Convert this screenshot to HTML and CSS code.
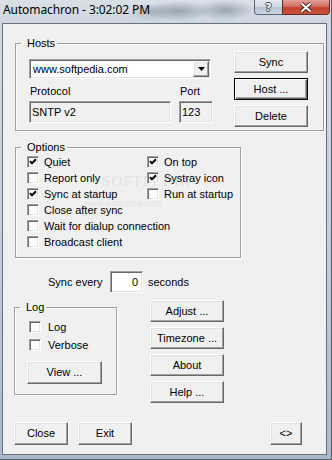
FILE: index.html
```html
<!DOCTYPE html>
<html>
<head>
<meta charset="utf-8">
<link rel="stylesheet" href="styles.css">
</head>
<body>
<div class="window">
  <div class="titlebar">
    <span class="title">Automachron - 3:02:02 PM</span>
    <div class="caption-btns">
      <div class="cbtn help"><span>?</span></div>
      <div class="cbtn close">
        <svg width="14" height="11" viewBox="0 0 14 11"><path d="M2.5 1.5 11.5 9.5 M11.5 1.5 2.5 9.5" stroke="#3b2a2a" stroke-width="4" fill="none"/><path d="M2.5 1.5 11.5 9.5 M11.5 1.5 2.5 9.5" stroke="#fff" stroke-width="2" fill="none"/></svg>
      </div>
    </div>
  </div>
  <div class="client">
    <fieldset class="group hosts">
      <legend>Hosts</legend>
      <div class="hosts-body">
        <div class="hosts-left">
          <div class="combo sunken">
            <span class="combo-text">www.softpedia.com</span>
            <span class="drop raised"><svg width="7" height="4" viewBox="0 0 7 4"><path d="M0 0H7L3.5 4Z" fill="#000"/></svg></span>
          </div>
          <div class="fields">
            <div class="field proto"><div class="flabel">Protocol</div><div class="edit sunken ro">SNTP v2</div></div>
            <div class="field port"><div class="flabel">Port</div><div class="edit sunken ro">123</div></div>
          </div>
        </div>
        <div class="btn-col">
          <div class="btn raised">Sync</div>
          <div class="btn default">Host ...</div>
          <div class="btn raised">Delete</div>
        </div>
      </div>
    </fieldset>

    <fieldset class="group options">
      <legend>Options</legend>
      <div class="options-body">
        <div class="opt-col left">
          <div class="chk"><span class="cb sunken"><svg viewBox="0 0 8 8"><path d="M1 3.3 3 5.3 7 1.3"/></svg></span>Quiet</div>
          <div class="chk"><span class="cb sunken"></span>Report only</div>
          <div class="chk"><span class="cb sunken"><svg viewBox="0 0 8 8"><path d="M1 3.3 3 5.3 7 1.3"/></svg></span>Sync at startup</div>
          <div class="chk"><span class="cb sunken"></span>Close after sync</div>
          <div class="chk"><span class="cb sunken"></span>Wait for dialup connection</div>
          <div class="chk"><span class="cb sunken"></span>Broadcast client</div>
        </div>
        <div class="opt-col right">
          <div class="chk"><span class="cb sunken"><svg viewBox="0 0 8 8"><path d="M1 3.3 3 5.3 7 1.3"/></svg></span>On top</div>
          <div class="chk"><span class="cb sunken"><svg viewBox="0 0 8 8"><path d="M1 3.3 3 5.3 7 1.3"/></svg></span>Systray icon</div>
          <div class="chk"><span class="cb sunken"></span>Run at startup</div>
        </div>
      </div>
    </fieldset>

    <div class="sync-row">
      <span class="sync-label">Sync every</span>
      <div class="num sunken">0</div>
      <span class="secs">seconds</span>
    </div>

    <div class="middle">
      <fieldset class="group log">
        <legend>Log</legend>
        <div class="log-body">
          <div class="chk"><span class="cb sunken"></span>Log</div>
          <div class="chk"><span class="cb sunken"></span>Verbose</div>
          <div class="btn raised view">View ...</div>
        </div>
      </fieldset>
      <div class="btn-col side">
        <div class="btn raised">Adjust ...</div>
        <div class="btn raised">Timezone ...</div>
        <div class="btn raised">About</div>
        <div class="btn raised">Help ...</div>
      </div>
    </div>

    <div class="bottom-row">
      <div class="btn raised close-btn">Close</div>
      <div class="btn raised exit-btn">Exit</div>
      <div class="btn raised arrows-btn">&lt;&gt;</div>
    </div>
  </div>
  <div class="watermark">SOFTPEDIA</div>
  <div class="watermark-url">www.softpedia.com</div>
</div>
</body>
</html>
```

FILE: styles.css
```css
* { box-sizing: border-box; }
html, body { margin: 0; padding: 0; }
body {
  width: 332px;
  height: 460px;
  overflow: hidden;
  font-family: "Liberation Sans", Arial, sans-serif;
  font-size: 11px;
  color: #000;
  background: #b9c7d5;
}

.window {
  position: relative;
  width: 332px;
  height: 460px;
  display: flex;
  flex-direction: column;
  background: linear-gradient(to bottom, #d2dbe4 0%, #c3cfdb 50%, #a9b9ca 100%);
  border-right: 1px solid #4f5d6b;
  border-bottom: 1px solid #4f5d6b;
}

.titlebar {
  height: 23px;
  flex: none;
  display: flex;
  align-items: flex-start;
  background:
    radial-gradient(ellipse 34px 10px at 178px 11px, rgba(80, 95, 110, .45), transparent),
    radial-gradient(ellipse 30px 10px at 225px 10px, rgba(85, 100, 115, .45), transparent),
    radial-gradient(ellipse 22px 9px at 150px 12px, rgba(110, 125, 140, .35), transparent),
    linear-gradient(to bottom, #d9e0e7, #cdd6df);
}
.title {
  font-family: "Noto Sans", "Open Sans", sans-serif;
  font-size: 12px;
  line-height: 20px;
  padding-left: 3px;
  color: #000;
  letter-spacing: -0.1px;
}
.caption-btns {
  margin-left: auto;
  margin-right: 1px;
  display: flex;
}
.cbtn {
  height: 15px;
  display: flex;
  align-items: center;
  justify-content: center;
  border: 1px solid #5c6670;
  border-top: none;
}
.cbtn.help {
  width: 28px;
  border-right: none;
  border-radius: 0 0 0 4px;
  background: linear-gradient(to bottom, #e4eaf0 0%, #cfd8e1 50%, #b8c5d2 51%, #c9d4df 100%);
}
.cbtn.help span {
  font-family: "DejaVu Sans", sans-serif;
  font-weight: bold;
  font-size: 11px;
  color: #fff;
  text-shadow: 1px 0 #3c4650, -1px 0 #3c4650, 0 1px #3c4650, 0 -1px #3c4650;
}
.cbtn.close {
  width: 48px;
  border-radius: 0 0 4px 0;
  border-color: #6a2a24;
  background: linear-gradient(to bottom, #e3a196 0%, #d36f60 45%, #c2402c 55%, #c9553f 100%);
}

.client {
  flex: 1;
  margin: 0 4px 4px 2px;
  border: 1px solid #65717e;
  background: #f0f0f0;
  padding: 13px 2px 9px 12px;
  display: flex;
  flex-direction: column;
}

/* 3D edges */
.raised {
  border: 1px solid;
  border-color: #fff #696969 #696969 #fff;
  box-shadow: inset -1px -1px #a0a0a0, inset 1px 1px #e3e3e3;
  background: #f0f0f0;
}
.sunken {
  border: 1px solid;
  border-color: #a0a0a0 #fff #fff #a0a0a0;
  box-shadow: inset 1px 1px #696969, inset -1px -1px #e3e3e3;
}

.group {
  margin: 0;
  padding: 0;
  min-width: 0;
  border: 1px solid #a0a0a0;
  box-shadow: inset 1px 1px #fff, 1px 1px #fff;
}
.group legend {
  font-size: 11px;
  line-height: 13px;
  padding: 0 2px 0 6px;
  margin-left: 5px;
  background: #f0f0f0;
}

.btn {
  height: 22px;
  display: flex;
  align-items: center;
  justify-content: center;
  line-height: 13px;
}
.btn.default {
  border: 1px solid #000;
  background: #f0f0f0;
  box-shadow: inset 1px 1px #fff, inset -1px -1px #696969, inset -2px -2px #a0a0a0;
}
.btn-col {
  display: flex;
  flex-direction: column;
  gap: 5px;
  width: 74px;
}

/* Hosts */
.hosts-body {
  display: flex;
  justify-content: space-between;
  padding: 1px 15px 3px 13px;
}
.hosts-left { margin-top: 8px; }
.combo {
  width: 182px;
  height: 20px;
  background: #fff;
  display: flex;
  align-items: center;
  padding-left: 3px;
}
.combo-text { line-height: 13px; }
.drop {
  margin-left: auto;
  margin-right: 1px;
  width: 16px;
  height: 16px;
  display: flex;
  align-items: center;
  justify-content: center;
}
.drop svg { display: block; }
.fields {
  margin-top: 6px;
  display: flex;
  gap: 8px;
}
.flabel {
  line-height: 13px;
  height: 13px;
  margin-bottom: 3px;
  padding-left: 1px;
}
.proto .edit { width: 142px; }
.port .edit { width: 34px; }
.edit {
  height: 22px;
  line-height: 20px;
  padding-left: 2px;
  background: #f0f0f0;
}

/* Options */
.options {
  margin-top: 10px;
  width: 226px;
}
.options-body {
  display: flex;
  padding: 0 0 7px 11px;
}
.opt-col.left { width: 120px; }
.chk {
  height: 16px;
  display: flex;
  align-items: center;
  gap: 5px;
  line-height: 13px;
  white-space: nowrap;
}
.cb {
  width: 12px;
  height: 12px;
  flex: none;
  background: #fff;
  display: flex;
  align-items: center;
  justify-content: center;
}
.cb svg {
  width: 8px;
  height: 8px;
  display: block;
}
.cb svg path {
  fill: none;
  stroke: #000;
  stroke-width: 2.1;
}

/* Sync every */
.sync-row {
  margin-top: 13px;
  height: 22px;
  display: flex;
  align-items: center;
  padding-left: 33px;
}
.sync-label { width: 62px; }
.num {
  width: 33px;
  height: 22px;
  background: #fff;
  text-align: right;
  line-height: 20px;
  padding-right: 4px;
}
.secs { margin-left: 5px; }

/* Middle */
.middle {
  margin-top: 7px;
  display: flex;
  align-items: flex-start;
}
.log {
  margin-top: 1px;
  margin-left: -1px;
  width: 103px;
}
.log-body {
  padding: 5px 0 10px 14px;
  display: flex;
  flex-direction: column;
  gap: 2px;
}
.log-body .chk { gap: 7px; }
.view {
  width: 75px;
  height: 23px;
  margin-top: 6px;
  margin-left: -2px;
}
.btn-col.side { margin-left: 33px; }

/* Bottom */
.bottom-row {
  margin-top: auto;
  display: flex;
}
.bottom-row .btn { height: 23px; }
.close-btn { width: 54px; margin-left: -1px; }
.exit-btn { width: 54px; margin-left: 10px; }
.arrows-btn { width: 32px; margin-left: 138px; }

/* Watermark overlay */
.watermark {
  position: absolute;
  left: 102px;
  top: 173px;
  font-family: "Liberation Serif", serif;
  font-size: 15px;
  letter-spacing: 1px;
  color: rgba(120, 120, 120, .14);
  pointer-events: none;
}
.watermark-url {
  position: absolute;
  left: 84px;
  top: 198px;
  font-family: "Liberation Sans", sans-serif;
  font-size: 9px;
  color: rgba(120, 120, 120, .14);
  pointer-events: none;
}
```
